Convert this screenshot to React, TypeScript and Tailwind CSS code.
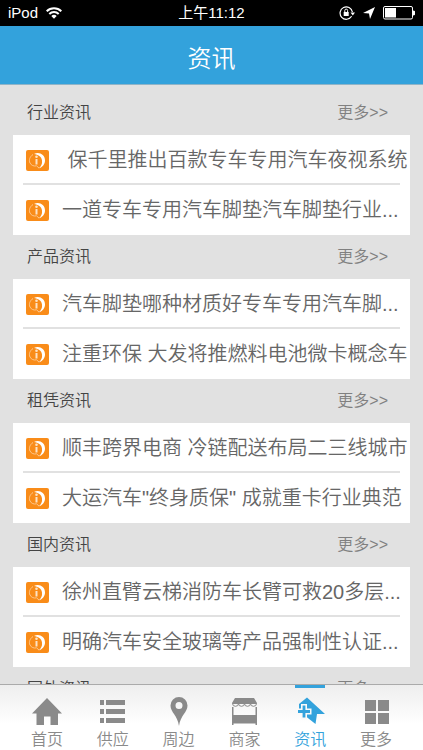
import type { ReactNode } from "react";

interface NewsSection {
    title: string;
    items: string[];
}

const sections: NewsSection[] = [
    { title: "行业资讯", items: ["\u00a0保千里推出百款专车专用汽车夜视系统", "一道专车专用汽车脚垫汽车脚垫行业..."] },
    { title: "产品资讯", items: ["汽车脚垫哪种材质好专车专用汽车脚...", "注重环保 大发将推燃料电池微卡概念车"] },
    { title: "租凭资讯", items: ["顺丰跨界电商 冷链配送布局二三线城市", "大运汽车\"终身质保\" 成就重卡行业典范"] },
    { title: "国内资讯", items: ["徐州直臂云梯消防车长臂可救20多层...", "明确汽车安全玻璃等产品强制性认证..."] },
    { title: "国外资讯", items: [] },
];

interface Tab {
    label: string;
    icon: ReactNode;
}

const tabs: Tab[] = [
    {
        label: "首页",
        icon: <path d="M16 2 1 17.500h4.500V29h7.500v-8.500h6.500V29h7.500V17.500H31z" />,
    },
    {
        label: "供应",
        icon: (
            <path d="M3 4h4v5H3zM9 4h19v5H9zM3 13h4v5H3zM9 13h19v5H9zM3 22h4v5H3zM9 22h19v5H9z" />
        ),
    },
    {
        label: "周边",
        icon: (
            <path
                fillRule="evenodd"
                d="M16 1a8.500 8.500 0 0 0-8.500 8.500c0 7 7 9.500 8.500 20.500 1.500-11 8.500-13.500 8.500-20.500A8.500 8.500 0 0 0 16 1zm0 5a3.500 3.500 0 1 1 0 7 3.500 3.500 0 0 1 0-7z"
            />
        ),
    },
    {
        label: "商家",
        icon: (
            <>
                <path d="M7 2h19l3 5v1H4V7z" />
                <path
                    d="M4.500 7.500a3 2.800 0 0 0 6 0 3 2.800 0 0 0 6 0 3 2.800 0 0 0 6 0 3 2.800 0 0 0 6 0z"
                    fill="#f8f8f8"
                    stroke="currentColor"
                    strokeWidth="1"
                />
                <path d="M4 11h1.500v8h22v-8H29v18h-1.500v-1.500h-22v1.500H4z" />
            </>
        ),
    },
    {
        label: "资讯",
        icon: (
            <>
                <path d="M13 1.500 31 18h-8l-1.500 10L5 15V8z" />
                <path d="M10 8v15.500M2.500 15.500h15" fill="none" stroke="#f9f9f9" strokeWidth="6" />
                <path d="M10 9.500v12M4 15.500h12" fill="none" stroke="currentColor" strokeWidth="2.800" />
            </>
        ),
    },
    {
        label: "更多",
        icon: <path d="M5 4h11v11H5zM18 4h11v11H18zM5 17h11v11H5zM18 17h11v11H18z" />,
    },
];

const StatusBar = () => (
    <div className="grid h-[26px] shrink-0 grid-cols-3 items-center bg-black px-2 text-[15px] leading-5 text-white">
        <div className="flex items-center gap-2">
            <span>iPod</span>
            <svg className="h-3 w-4" viewBox="0 0 16 12" fill="none" stroke="currentColor" strokeWidth="2">
                <path d="M.7 4.200a10.300 10.300 0 0 1 14.600 0M3.300 7a6.600 6.600 0 0 1 9.400 0" />
                <path d="M8 11.800 5.300 9a3.800 3.800 0 0 1 5.400 0z" fill="currentColor" stroke="none" />
            </svg>
        </div>
        <div className="text-center">上午11:12</div>
        <div className="flex items-center justify-end gap-2">
            <svg className="size-4" viewBox="0 0 16 16" fill="none" stroke="currentColor">
                <path d="M12.600 11.300a6.200 6.200 0 1 1 .8-4.300" strokeWidth="1.200" />
                <path d="M11.500 7.500h4.500l-2.200 3z" fill="currentColor" stroke="none" />
                <path d="M4.700 7h5v4h-5z" fill="currentColor" stroke="none" />
                <path d="M5.800 7V5.500a1.400 1.400 0 0 1 2.800 0V7" />
            </svg>
            <svg className="size-3" viewBox="0 0 12 12" fill="currentColor">
                <path d="M12 0 7 12 6 6.500 0 6z" />
            </svg>
            <svg className="h-[14px] w-8" viewBox="0 0 32 14" fill="none" stroke="currentColor">
                <rect x=".5" y=".5" width="29" height="12.500" rx="1.500" />
                <path d="M2 2h11v9.500H2z" fill="currentColor" stroke="none" />
                <path d="M30 4.500a2.500 2.500 0 0 1 0 5z" fill="currentColor" stroke="none" />
            </svg>
        </div>
    </div>
);

const NewsIcon = () => (
    <svg className="h-[21px] w-[23px] shrink-0" viewBox="0 0 23 21">
        <rect width="23" height="21" rx="2" fill="#f98c19" />
        <path d="M7 4.500C4 6.500 2.500 10 4 13c1.200 2.500 4 3.500 6.500 2.800L13 18" fill="none" stroke="#fcc68c" strokeWidth="1" />
        <path d="M8 4c5-2.500 11 .5 11 6.500 0 4-3 7-6.500 8 2.500-2 4-4.500 3.500-8C15.500 6.500 12 4.500 8 4z" fill="#fff" />
        <circle cx="10.500" cy="6.700" r="1.300" fill="#fde3c6" />
        <path d="M9.500 9h2v5.500h-2z" fill="#fde3c6" />
    </svg>
);

const App = () => {
    return (
        <div className="flex h-screen flex-col overflow-hidden bg-[#e1e1e1] font-['Liberation_Sans','Noto_Sans_CJK_SC',sans-serif]">
            <StatusBar />
            <header className="flex h-[59px] shrink-0 items-center justify-center border-b border-[#8fb4c8] bg-[#33a2dc] pt-1">
                <h1 className="font-['Noto_Sans_CJK_SC',sans-serif] text-2xl font-[350] text-white">资讯</h1>
            </header>

            <main className="min-h-0 flex-1 overflow-hidden px-[13px] pt-[6px]">
                {sections.map((section) => (
                    <section key={section.title}>
                        <div className="flex h-11 items-center justify-between pr-[22px] pl-[14px] text-base">
                            <h2 className="font-[350] text-[#444]">{section.title}</h2>
                            <a href="#" className="font-[350] text-[#808080]">更多&gt;&gt;</a>
                        </div>
                        <ul className="bg-white px-[10px]">
                            {section.items.map((item) => (
                                <li key={item} className="h-[50px] border-b-2 border-[#e1e1e1] last:border-b-0">
                                    <a href="#" className="flex h-[50px] items-center gap-[13px] pl-[3px]">
                                        <NewsIcon />
                                        <span className="text-xl font-[350] whitespace-nowrap text-[#666]">{item}</span>
                                    </a>
                                </li>
                            ))}
                        </ul>
                    </section>
                ))}
            </main>

            <nav className="grid h-[66px] shrink-0 grid-cols-6 border-t border-[#aaa] bg-linear-to-b from-[#eee] to-white to-60% px-[14px]">
                {tabs.map((tab) => {
                    const active = tab.label === "资讯";
                    return (
                        <a
                            key={tab.label}
                            href="#"
                            className={`flex flex-col items-center ${active ? "text-[#33a2dc]" : "text-[#8a8a8a]"}`}
                        >
                            <span className={`h-[3px] w-[30px] ${active ? "bg-[#33a2dc]" : ""}`} />
                            <svg className="mt-2 size-8" viewBox="0 0 32 32" fill="currentColor">
                                {tab.icon}
                            </svg>
                            <span className="pt-[2px] text-base leading-5 font-[350]">{tab.label}</span>
                        </a>
                    );
                })}
            </nav>
        </div>
    );
};

export default App;
